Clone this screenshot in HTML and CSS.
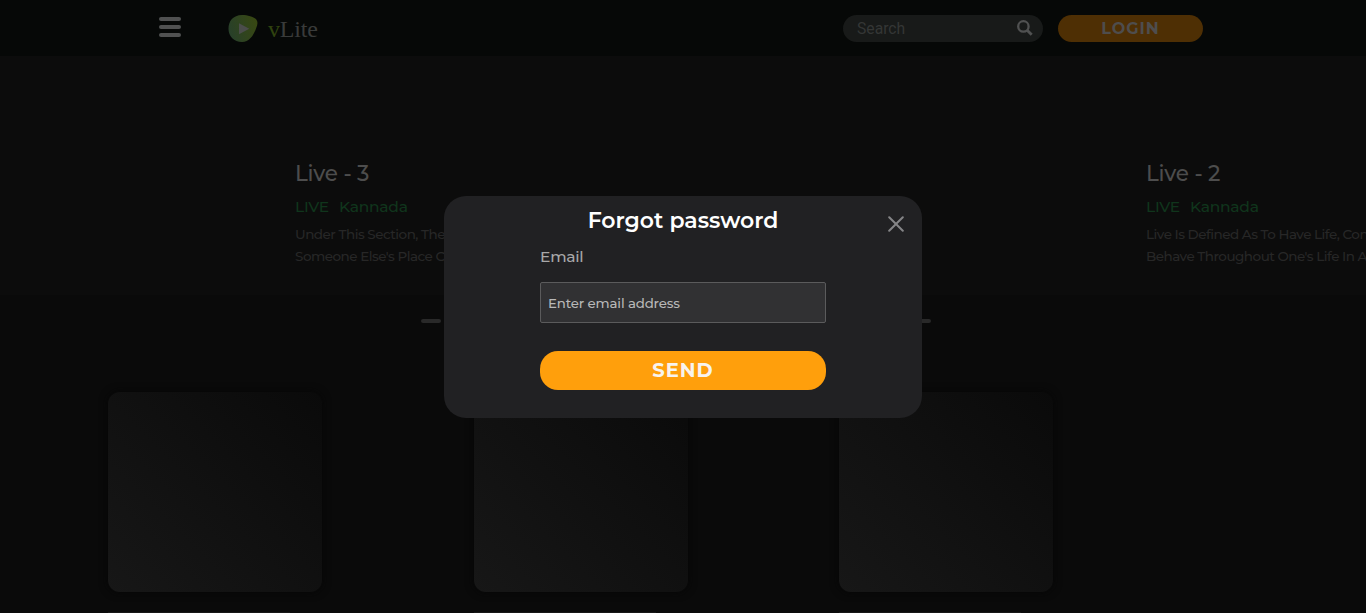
FILE: index.html
```html
<!DOCTYPE html>
<html lang="en">
<head>
<meta charset="utf-8">
<title>vLite</title>
<link rel="stylesheet" href="styles.css">
</head>
<body>
<header class="topbar">
  <div class="menu"><span></span><span></span><span></span></div>
  <div class="brand">
    <svg class="brand-mark" width="30" height="28" viewBox="0 0 30 28">
      <defs><linearGradient id="leaf" x1="0" y1="0.6" x2="1" y2="0.3"><stop offset="0" stop-color="#28402a"/><stop offset="1" stop-color="#384812"/></linearGradient></defs>
      <path d="M14 0C20 0 25.500 1.800 28.300 4.600C30.200 7 29.500 10 28.200 13C25.500 21 21 27 14 27C6 27 .5 21 .5 14C.5 6 5 .2 14 0Z" fill="url(#leaf)"/>
      <path d="M11 8.300L21.300 13.700L11 19.200Z" fill="#4b4d4b"/>
    </svg>
    <span class="brand-name"><span class="brand-v">v</span>Lite</span>
  </div>
  <div class="search"><span>Search</span>
    <svg width="16" height="16" viewBox="0 0 16 16" fill="none" stroke="#505151"><circle cx="6.400" cy="6.400" r="5.200" stroke-width="2.300"/><path d="M10.200 10.200L14.700 14.700" stroke-width="2.800"/></svg>
  </div>
  <div class="login"><span>LOGIN</span></div>
</header>
<section class="hero">
  <article class="slide">
    <h2>Live - 3</h2>
    <div class="tags"><span>LIVE</span><span>Kannada</span></div>
    <p>Under This Section, The</p>
    <p>Someone Else's Place O</p>
  </article>
  <article class="slide">
    <h2>Live - 2</h2>
    <div class="tags"><span>LIVE</span><span>Kannada</span></div>
    <p>Live Is Defined As To Have Life, Con</p>
    <p>Behave Throughout One's Life In A</p>
  </article>
</section>
<div class="dots"><i></i><i></i></div>
<main class="cards">
  <div class="card"><div class="thumb"></div><div class="line"></div></div>
  <div class="card"><div class="thumb"></div><div class="line"></div></div>
  <div class="card"><div class="thumb"></div><div class="line"></div></div>
</main>
<div class="modal">
  <h1><span>Forgot password</span></h1>
  <svg class="close" width="16" height="16" viewBox="0 0 16 16"><path d="M1.200 1.200L14.800 14.800M14.800 1.200L1.200 14.800" stroke="#858587" stroke-width="2" stroke-linecap="round"/></svg>
  <label><span>Email</span></label>
  <div class="field"><span>Enter email address</span></div>
  <div class="send"><span>SEND</span></div>
</div>
</body>
</html>
```
FILE: styles.css
```css
* { box-sizing: border-box; }
body { margin: 0; width: 1366px; height: 613px; overflow: hidden; background: #0a0a0a; font-family: Montserrat, Inter, sans-serif; }
h1, h2, p { margin: 0; white-space: nowrap; }
.topbar { height: 56px; background: #060807; display: flex; align-items: flex-start; padding-left: 159px; }
.menu { width: 22px; margin-top: 17px; display: grid; gap: 4px; }
.menu span { height: 4px; border-radius: 2px; background: #505151; }
.brand { display: flex; margin: 15px 0 0 47px; width: 615px; }
.brand-mark { display: block; }
.brand-name { font: 24px/28px "Liberation Serif", serif; color: #393b3a; margin-left: 10px; letter-spacing: -.2px; }
.brand-v { color: #30430f; }
.search { width: 200px; height: 27px; margin-top: 15px; border-radius: 14px; background: #181a19; display: flex; justify-content: space-between; padding: 5px 10px 0 14px; }
.search span { font: 15.700px/18px Roboto, sans-serif; color: #343635; }
.login { width: 145px; height: 27px; margin: 15px 0 0 15px; border-radius: 14px; background: #4e2f04; color: #4e4d4d; font-size: 16px; line-height: 27px; font-weight: 700; text-align: center; letter-spacing: 1px; }
.hero { height: 239px; background: #0c0c0c; display: flex; padding: 103px 0 0 295px; overflow: hidden; }
.slide { width: 851px; flex: none; }
.slide:last-child { width: 220px; }
.slide h2 { font-size: 21.500px; line-height: 28px; font-weight: 500; color: #4d4d4d; letter-spacing: -.2px; }
.tags { display: flex; gap: 10px; margin-top: 10px; font-size: 15.500px; line-height: 20px; font-weight: 500; color: #10351c; letter-spacing: -.25px; }
.slide p { font-size: 13.500px; line-height: 22px; font-weight: 500; color: #272727; letter-spacing: -.5px; }
.tags + p { margin-top: 6px; }
.dots { height: 97px; padding: 24px 0 0 421px; display: flex; gap: 470px; }
.dots i { width: 20px; height: 4px; border-radius: 2px; background: #292929; }
.cards { display: flex; padding-left: 108px; }
.card { width: 365.500px; flex: none; }
.card:last-child { width: 214px; }
.thumb { width: 214px; height: 200px; border-radius: 12px; background: linear-gradient(45deg, #171717, #0a0a0a); box-shadow: 0 0 8px #060606; }
.line { width: 182px; height: 12px; margin-top: 20px; background: #171717; }
.modal { position: absolute; left: 444px; top: 195.500px; width: 478px; height: 222.500px; border-radius: 22px; background: #212123; padding: 11.500px 96px 0; }
.modal h1 { color: #fff; font-size: 22px; line-height: 28px; font-weight: 600; text-align: center; }
.close { position: absolute; left: 444px; top: 20.500px; }
.modal label { display: block; margin-top: 12px; color: #a8a8a9; font-size: 15.500px; line-height: 20px; font-weight: 500; letter-spacing: -.25px; }
.field { height: 40.500px; margin-top: 15px; border: 1px solid #5b5b5c; border-radius: 2px; background: #313133; color: #b8b8b8; font-size: 13.333px; line-height: 41px; font-weight: 500; letter-spacing: -.15px; padding-left: 7px; }
.send { height: 39px; margin-top: 28.500px; border-radius: 18px; background: #ff9f0c; color: #f7f3ee; font-size: 19.500px; line-height: 38px; font-weight: 700; text-align: center; letter-spacing: 1px; }
```
